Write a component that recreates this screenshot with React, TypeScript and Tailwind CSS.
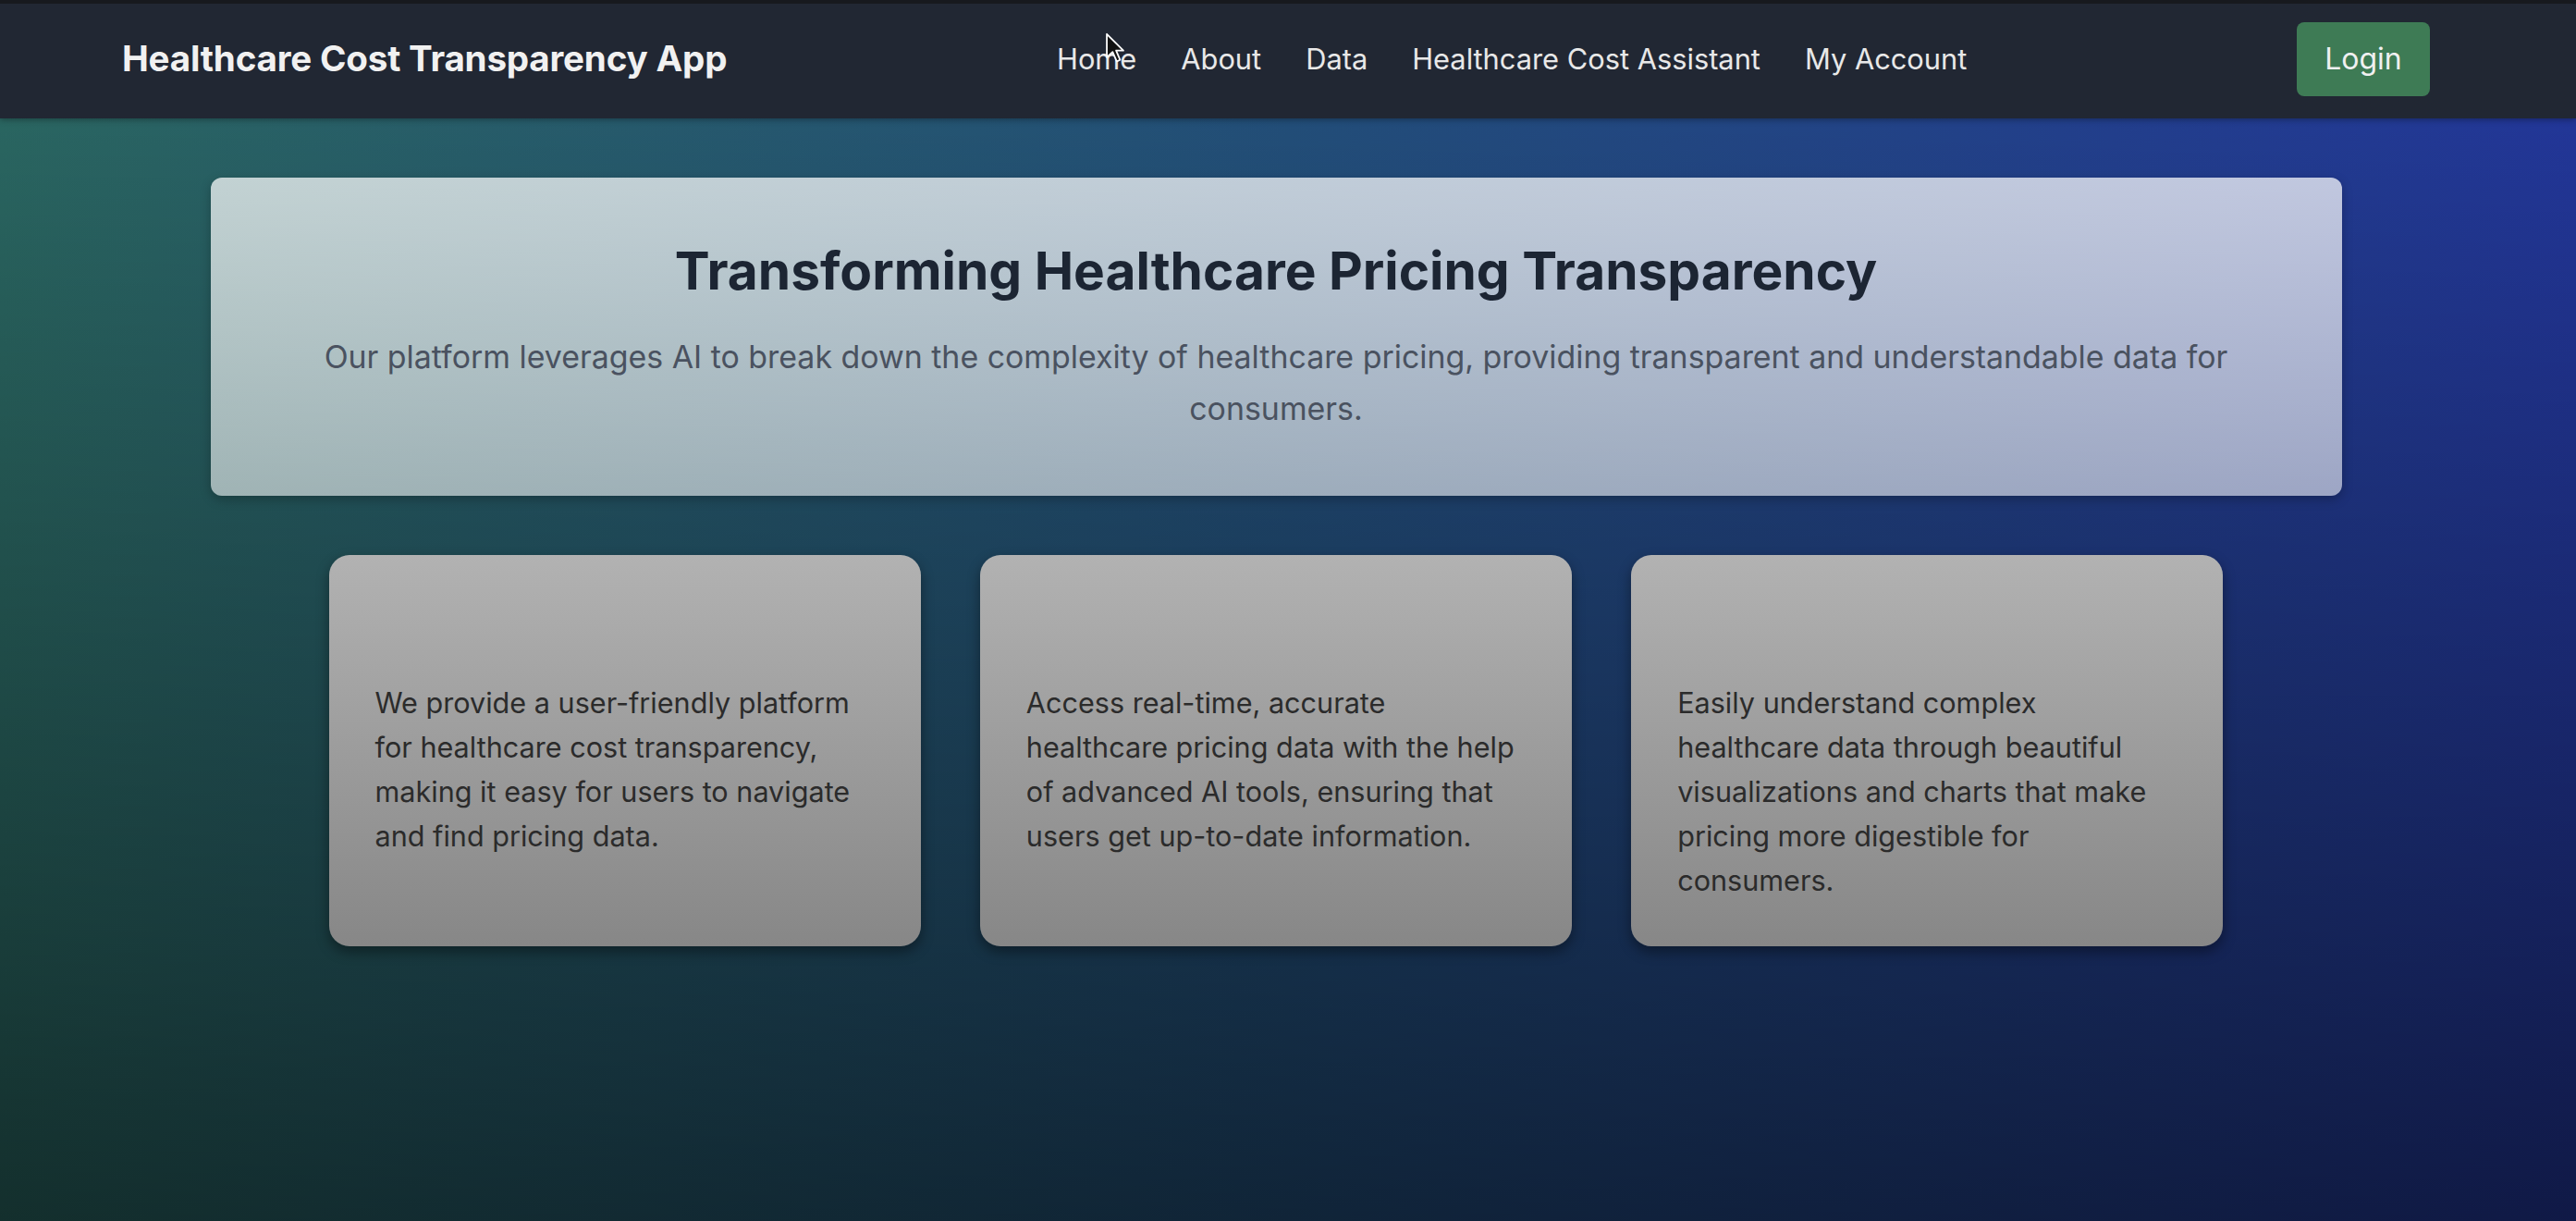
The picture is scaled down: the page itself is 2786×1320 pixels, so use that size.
import React from "react";

const links = ["Home", "About", "Data", "Healthcare Cost Assistant", "My Account"];

const features = [
  "We provide a user-friendly platform for healthcare cost transparency, making it easy for users to navigate and find pricing data.",
  "Access real-time, accurate healthcare pricing data with the help of advanced AI tools, ensuring that users get up-to-date information.",
  "Easily understand complex healthcare data through beautiful visualizations and charts that make pricing more digestible for consumers.",
];

const Cursor = () => (
  <svg
    className="absolute left-[1195px] top-[35px] w-[22px] h-[34px] pointer-events-none"
    viewBox="0 0 12 19"
    xmlns="http://www.w3.org/2000/svg"
  >
    <path
      d="M1 1 L1 15 L4.5 11.8 L7 17.5 L9 16.6 L6.6 11 L11 11 Z"
      fill="#111"
      stroke="#fff"
      strokeWidth="1"
      strokeLinejoin="round"
    />
  </svg>
);

export default function App() {
  return (
    <div className="relative min-h-screen h-[1320px] w-full overflow-hidden font-['Inter',sans-serif] bg-[linear-gradient(to_bottom,rgba(0,0,0,0)_0%,rgba(0,0,0,0.56)_100%),linear-gradient(to_right,#2c6b66_0%,#24527f_50%,#2439a0_100%)]">
      {/* navbar */}
      <nav className="h-[128px] w-full bg-[#212733] border-t-4 border-[#17191e] shadow-[0_2px_6px_rgba(0,0,0,0.3)]">
        <div className="w-[2760px] h-full flex items-center justify-between px-[132px] pb-[4px]">
          <span className="text-[38.6px] font-bold text-[#f1f1f1] tracking-[-0.2px]">
            Healthcare Cost Transparency App
          </span>
          <ul className="flex items-center gap-[48px] text-[30.8px] text-[#e8e8e8]">
            {links.map((l) => (
              <li key={l}>{l}</li>
            ))}
          </ul>
          <button className="w-[144px] h-[80px] rounded-[8px] bg-[#3e7b55] text-[32px] text-[#f0f0f0]">
            Login
          </button>
        </div>
      </nav>
      <Cursor />

      <main className="w-[2760px]">
        {/* hero */}
        <section className="mx-auto mt-[64px] w-[2305px] rounded-[12px] bg-gradient-to-b from-white/[0.72] to-white/[0.57] pt-[69px] pb-[66px] px-[57px] text-center shadow-[0_4px_12px_rgba(0,0,0,0.25)]">
          <h1 className="text-[56.8px] leading-[64px] font-bold text-[#1c2533]">
            Transforming Healthcare Pricing Transparency
          </h1>
          <p className="mt-[33px] text-[33.9px] leading-[56px] text-[#4a5260]">
            Our platform leverages AI to break down the complexity of healthcare pricing, providing transparent and understandable data for consumers.
          </p>
        </section>

        {/* feature cards */}
        <div className="mx-auto mt-[64px] w-[2049px] grid grid-cols-3 gap-[64px]">
          {features.map((f, i) => (
            <div
              key={i}
              className="h-[423px] rounded-[22px] bg-gradient-to-b from-[#b2b2b2] to-[#878787] pt-[136px] px-[50px] pb-[47px] shadow-[0_6px_14px_rgba(0,0,0,0.4)]"
            >
              <p className="text-[30.6px] leading-[48px] text-[#2b2b2b]">{f}</p>
            </div>
          ))}
        </div>
      </main>
    </div>
  );
}
